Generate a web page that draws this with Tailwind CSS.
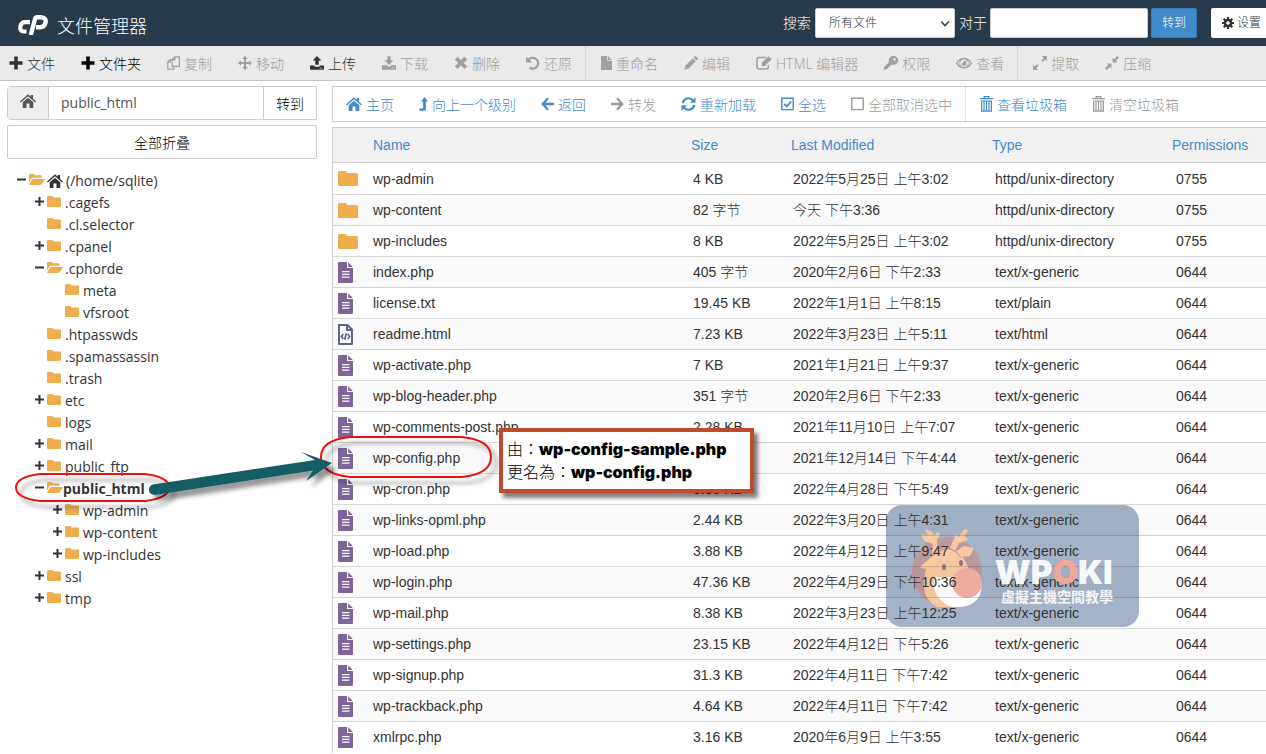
<!DOCTYPE html>
<html lang="zh-CN">
<head>
    <meta charset="UTF-8" />
    <meta name="viewport" content="width=device-width, initial-scale=1.0" />
    <title>文件管理器</title>
    <script src="https://cdn.jsdelivr.net/npm/@tailwindcss/browser@4"></script>
    <style>
        body { font-family: 'Open Sans', 'Noto Sans CJK SC', sans-serif; }
        .grid-font { font-family: 'Liberation Sans', 'Noto Sans CJK SC', sans-serif; }
    </style>
</head>
<body class="bg-white text-[#333] text-sm overflow-x-hidden">
    <!-- Icon sprite -->
    <svg class="hidden">
        <symbol id="plus" viewBox="0 0 14 14"><path d="M5.2 .5h3.6v4.700h4.700v3.600h-4.700v4.700h-3.600v-4.700h-4.700v-3.600h4.700z"/></symbol>
        <symbol id="copy" viewBox="0 0 13 14"><path fill="none" stroke="currentColor" stroke-width="1.200" d="M5.200 3.600 7.600 .800h4.800v9.600H5.200zM7.800 .800v3H5.200M5 3.600H3L.800 6v7.200h6.300v-2.600M3.200 3.900v2.300H.800"/></symbol>
        <symbol id="move" viewBox="0 0 14 14"><path d="M7 0l2.800 3H8v3h3V4.200L14 7l-3 2.800V8H8v3h1.800L7 14l-2.800-3H6V8H3v1.800L0 7l3-2.800V6h3V3H4.200z"/></symbol>
        <symbol id="upload" viewBox="0 0 14 14"><path d="M7 0l4.300 4.600H8.700v4.200H5.300V4.600H2.700zM0 9.400h4.300v.7q.2.700 1 .7h3.400q.8 0 1-.7v-.7H14v3.800q0 .6-.7.600H.7q-.7 0-.7-.6zM9.800 11.800v.9h.9v-.9zm1.800 0v.9h.9v-.9z" fill-rule="evenodd"/></symbol>
        <symbol id="download" viewBox="0 0 14 14"><path d="M5.300 .3h3.400v4h2.700L7 8.900 2.600 4.300h2.700zM0 9.200h4.500L7 11l2.500-1.800H14v4q0 .6-.7.600H.7q-.7 0-.7-.6zM9.800 11.600v.9h.9v-.9zm1.800 0v.9h.9v-.9z" fill-rule="evenodd"/></symbol>
        <symbol id="times" viewBox="0 0 14 14"><path d="M3.500 .800 7 4.100 10.500 .800 13.200 3.400 9.700 6.900 13.200 10.300 10.500 13 7 9.600 3.500 13 .800 10.300 4.300 6.900 .800 3.400z"/></symbol>
        <symbol id="undo" viewBox="0 0 14 14"><path fill="none" stroke="currentColor" stroke-width="2.200" d="M2.400 4A5.400 5.400 0 1 1 3.600 11.600"/><path d="M.2 .4v6h6z"/></symbol>
        <symbol id="file" viewBox="0 0 11 14"><path d="M.7 0H6.200v4.800H11V13.300q0 .7-.7.700H.7q-.7 0-.7-.7V.7Q0 0 .7 0zM7.100 .1l3.800 3.800H7.100z"/></symbol>
        <symbol id="pencil" viewBox="0 0 14 14"><path d="M8.800 2.200 11.800 5.200 4.400 12.800 .3 13.800 1.300 9.700zM9.600 1.400l1-1q.7-.6 1.400 0l1.600 1.600q.6.700 0 1.400l-1 1zM2.200 10.800l-.5 1.600 1.600-.5z" fill-rule="evenodd"/></symbol>
        <symbol id="edit" viewBox="0 0 16 14"><path fill="none" stroke="currentColor" stroke-width="1.500" d="M10.200 1.500H3Q1 1.500 1 3.300v7.700q0 1.900 2 1.900h7.400q1.900 0 1.900-1.900V9"/><path d="M12.500 .2l3.100 3.100-6.700 6.600H5.800V6.800z"/></symbol>
        <symbol id="key" viewBox="0 0 14 14"><path fill-rule="evenodd" d="M9.500 0a4.400 4.400 0 1 1-1.400 8.500l-1 1-1.200.1-.3 1.400-1.400.3-.3 1.300-1.300.2-.6.800-2 .2V11.200l5-5.300A4.400 4.400 0 0 1 9.500 0zM10.500 2.100a1.300 1.300 0 1 0 .1 0z"/></symbol>
        <symbol id="eye" viewBox="0 0 16 14"><path fill-rule="evenodd" d="M8 1.800q5 0 8 5.400-3 5.400-8 5.400t-8-5.400q3-5.400 8-5.400zM8 3.300a3.900 3.900 0 1 0 .1 0zM4 4.300Q2.500 5.400 1.600 7.200q.9 1.700 2.400 2.800-1.200-2.700 0-5.700zm8 0q1.200 3 0 5.700 1.500-1.100 2.400-2.800-.9-1.800-2.400-2.900zM8 4.600a2.600 2.600 0 1 1-2.600 2.600q.9.400 1.600-.2T8 4.600z"/></symbol>
        <symbol id="expand" viewBox="0 0 14 14"><path d="M8.800 0H14v5.200l-1.700-1.700-2.500 2.500-1.600-1.600 2.500-2.500zM0 8.800l1.700 1.700 2.300-2.300L5.600 9.800 3.400 12.200 5.200 14H0z"/></symbol>
        <symbol id="compress" viewBox="0 0 14 14"><path d="M7.600 1.600l1.600 1.500L12.200 0 14 1.700l-3.100 3.100 1.600 1.600H7.600zM1.600 7.600h4.900v4.900L4.900 10.900 1.800 14 0 12.200l3.100-3.100z"/></symbol>
        <symbol id="home" viewBox="0 0 16 14"><path d="M8 .3l2.800 2.500V.9H13v3.900l3 2.600-.9 1.100L8 2.300 .9 8.500l-.9-1.100zM8 3.700l5.300 4.500v5.100q0 .6-.5.600H9.500V9.500h-3v4.400H3.200q-.5 0-.5-.6V8.200z"/></symbol>
        <symbol id="levelup" viewBox="0 0 9 14"><path d="M5.500 0 9 4.600H6.900v7.800q0 1.400-1.400 1.400H.8L0 11.500h4.100V4.600H2z"/></symbol>
        <symbol id="left" viewBox="0 0 13 14"><path fill="none" stroke="currentColor" stroke-width="2.300" d="M7 1.200 1.700 7 7 12.800M1.900 7H13"/></symbol>
        <symbol id="right" viewBox="0 0 13 14"><path fill="none" stroke="currentColor" stroke-width="2.300" d="M6 1.200 11.300 7 6 12.800M11.100 7H0"/></symbol>
        <symbol id="refresh" viewBox="0 0 14 14"><path fill="none" stroke="currentColor" stroke-width="2.200" d="M1.200 6A5.900 5.900 0 0 1 11.500 3.400M12.800 8A5.900 5.900 0 0 1 2.500 10.600"/><path d="M14 .2v5.500H8.500zM0 13.800V8.300h5.500z"/></symbol>
        <symbol id="checked" viewBox="0 0 13 14"><path fill="none" stroke="currentColor" stroke-width="1.400" d="M.8 1.200h11.400v11.400H.8z"/><path fill="none" stroke="currentColor" stroke-width="1.900" d="M3.200 6.800 5.700 9.300 10.200 4.600"/></symbol>
        <symbol id="unchecked" viewBox="0 0 13 14"><path fill="none" stroke="currentColor" stroke-width="1.400" d="M.8 1.200h11.400v11.400H.8z"/></symbol>
        <symbol id="trash" viewBox="0 0 13 16"><path fill="none" stroke="currentColor" stroke-width="1.200" d="M0 2.600h13M4.200 2.600V.6h4.600v2M1.600 5h9.800V15.200H1.600zM4 5V15M6.500 5V15M9 5V15"/></symbol>
        <symbol id="gear" viewBox="0 0 14 14"><circle cx="7" cy="7" r="3.600" fill="none" stroke="currentColor" stroke-width="3"/><path fill="none" stroke="currentColor" stroke-width="2.600" d="M7 0v3M7 11v3M0 7h3M11 7h3M2 2l2 2M10 10l2 2M12 2l-2 2M4 10l-2 2"/></symbol>
        <symbol id="folder" viewBox="0 0 20 15" preserveAspectRatio="none"><path d="M0 1.500Q0 0 1.500 0H7Q8.300 0 8.700 1L9.200 2H18.500Q20 2 20 3.500V13.500Q20 15 18.500 15H1.500Q0 15 0 13.500z"/></symbol>
        <symbol id="folder-open" viewBox="0 0 16 12" preserveAspectRatio="none"><path d="M0 9.200V1.200Q0 0 1.200 0h3.400q1 0 1.200 1.400h5.600q1.200 0 1.200 1.200v1.600H4Q3 4.200 2.300 5.200zM4.200 5.400H15.600q.6.200.2.800l-3 4.800q-.6 1-1.600 1H.4q-.6-.2-.2-.9L3 6.200Q3.500 5.400 4.200 5.400z"/></symbol>
        <symbol id="doc" viewBox="0 0 15 21"><path fill-rule="evenodd" d="M1 0H9V6H15V20Q15 21 14 21H1Q0 21 0 20V1Q0 0 1 0zM10.200 .3 14.800 4.900H10.200zM4 9v1.200h7.500V9zM4 11.800V13h7.500v-1.200zM4 14.600v1.200h7.500v-1.200z"/></symbol>
        <symbol id="code" viewBox="0 0 15 21"><path fill="none" stroke="currentColor" stroke-width="1.900" stroke-linejoin="round" d="M1 1H9.500L14 5.500V20H1zM9 1V6h5"/><path fill="none" stroke="currentColor" stroke-width="1.600" d="M5.300 10 3.300 12.500l2 2.500M9.700 10l2 2.500-2 2.500M8.400 9.200l-1.800 6.600"/></symbol>
    </svg>

    <!-- Top bar -->
    <header class="flex items-center justify-between h-[46px] bg-[#293a4a] text-white">
        <div class="flex items-center pl-[18px] pt-1">
            <svg class="w-[30px] h-5" viewBox="0 0 30 20" fill="none" stroke="#fff">
                <path stroke-width="4.200" d="M12 7.200H7.200Q3.400 7.200 2.400 11.200 1.600 16.500 5.800 16.500H8.500"/>
                <path stroke-width="4.400" d="M12.800 20 17 4Q17.400 2.200 19.200 2.200H23Q28.400 2.500 27.600 7.300 26.600 12.300 21.800 12.300H18"/>
            </svg>
            <h1 class="ml-[9px] pt-0.5 text-lg leading-6 font-light">文件管理器</h1>
        </div>
        <form class="flex items-center font-light">
            <label for="scope">搜索</label>
            <div class="relative ml-1">
                <select id="scope" class="appearance-none w-[140px] h-[30px] pl-[13px] bg-white border border-[#ccc] rounded-xs text-xs text-[#333]">
                    <option>所有文件</option>
                </select>
                <svg class="absolute right-[5px] top-3 w-2.5 h-2" viewBox="0 0 10 8"><path fill="none" stroke="#444" stroke-width="1.600" d="M1 1.500 5 5.500 9 1.500"/></svg>
            </div>
            <label for="query" class="ml-1">对于</label>
            <input id="query" type="text" class="ml-[3px] w-[158px] h-[30px] px-2 bg-white border border-[#ccc] rounded-xs text-[#333]" />
            <button type="button" class="ml-[3px] w-[46px] h-[30px] bg-[#428bca] border border-[#357ebd] rounded-xs text-xs">转到</button>
            <button type="button" class="flex items-center ml-3.5 pl-[11px] w-[55px] h-[30px] bg-white rounded-l-xs text-xs text-[#333] whitespace-nowrap">
                <svg class="w-3 h-3 mr-[3px] fill-current"><use href="#gear"/></svg>设置
            </button>
        </form>
    </header>

    <!-- Main toolbar -->
    <nav class="h-[35px] bg-[#eaeaea] border-b border-[#c5c6c9] overflow-hidden">
        <div id="toolbar" class="flex h-full -ml-1"></div>
    </nav>

    <main class="flex pt-[5px] pl-[7px] gap-[15px]">
        <aside class="w-[310px] shrink-0">
            <form class="flex h-[34px] mb-[5px] border border-[#ccc] rounded-l-sm">
                <button type="button" aria-label="主目录" class="w-[41px] pb-1 flex items-center justify-center bg-[#eee] border-r border-[#ccc] text-[#555]">
                    <svg class="w-4 h-3.5 fill-current"><use href="#home"/></svg>
                </button>
                <input type="text" aria-label="路径" value="public_html" class="flex-1 min-w-0 px-3 text-[#555]" />
                <button type="button" class="w-[53px] pt-0.5 border-l border-[#ccc] font-light text-black">转到</button>
            </form>
            <button type="button" class="block w-full h-[34px] pt-0.5 border border-[#ccc] rounded-xs font-light text-black">全部折叠</button>
            <ul id="tree" class="mt-[11px]"></ul>
        </aside>

        <section class="relative z-10 flex-1 min-w-0">
            <nav id="actions" class="flex h-9 pl-px border border-r-0 border-[#ccc]"></nav>
            <div class="grid-font mt-[5px] border-l border-[#ccc]">
                <table class="w-full table-fixed border-collapse text-left">
                    <thead>
                        <tr class="h-[35px] bg-[#f1f1f1] border-y border-[#ccc] text-[#428bca]">
                            <th class="w-10"></th>
                            <th class="font-normal">Name</th>
                            <th class="w-[100px] font-normal">Size</th>
                            <th class="w-[201px] font-normal">Last Modified</th>
                            <th class="w-[180px] font-normal">Type</th>
                            <th class="w-[94px] font-normal">Permissions</th>
                        </tr>
                    </thead>
                    <tbody id="files" class="font-light"></tbody>
                </table>
            </div>
        </section>
    </main>

    <!-- Watermark: panel and mascot sit under the file rows, wordmark over them -->
    <div class="absolute left-[886px] top-[505px] w-[253px] h-[122px] rounded-2xl bg-[#1e4173]/40 overflow-hidden">
        <svg class="w-full h-full" viewBox="0 0 253 122">
            <circle cx="61" cy="67" r="35" fill="#bb9a9f"/>
            <path fill="#f8c8a0" d="M47 50Q52 43 61 43 69 43 74 49 82 58 84 70L88 90 72 102 51 102Q38 95 38 80 38 60 47 50z"/>
            <path fill="#f8c8a0" d="M46 49 47 39 38 36 35 29 42 31 39 24 45 26 48 30 52 27 54 30 51 35 52 46zM64 43 70 29 73 32 78 24 82 25 79 31 82 35 73 38 69 46zM71 46 78 41 88 43 84 51 75 52zM45 52 34 62 38 64 44 61z"/>
            <path fill="none" stroke="#bb8f90" d="M47 51Q56 42 65 44 71 46 75 53"/>
            <path fill="#fff" d="M49 72Q45 82 52 92 60 103 72 102 88 102 94 90 96 84 96 75L90 87 80 92Z"/>
            <path fill="#fff" d="M49 72 70 72 80 92 56 94z"/>
            <circle cx="81" cy="78" r="15" fill="#f2b0a3"/>
            <ellipse cx="58" cy="62" rx="2" ry="3" fill="#8e7480"/>
            <ellipse cx="75" cy="58" rx="2" ry="3" fill="#8e7480"/>
        </svg>
    </div>
    <div class="absolute z-20 left-[995px] top-[556px] text-white/90 whitespace-nowrap" lang="zh-TW">
        <p class="font-[Inter] font-black text-[33px] leading-8">WP<span class="text-[#f2a899]">O</span>KI</p>
        <p class="pl-1.5 font-bold leading-[18px]">虛擬主機空間教學</p>
    </div>

    <!-- Callouts -->
    <svg class="absolute z-20 left-0 top-0 w-[800px] h-[560px] pointer-events-none" viewBox="0 0 800 560">
        <defs>
            <filter id="shadow" x="-20%" y="-50%" width="140%" height="220%"><feDropShadow dx="5" dy="6" stdDeviation="2" flood-color="#000" flood-opacity=".4"/></filter>
        </defs>
        <g fill="none" stroke="#f01010" stroke-width="2" filter="url(#shadow)">
            <path d="M40 474H145Q169 477 169 487.500T145 501H40Q16 498 16 487.500T40 474z"/>
            <path d="M350 437H462Q491 440 491 457T462 477H350Q321 474 321 457T350 437z"/>
        </g>
        <path fill="#135c63" filter="url(#shadow)" d="M153 484.500 315 460 301 452 332 463 306 481 313 470.500 155 495Q149 494.500 149 490T153 484.500z"/>
    </svg>
    <div class="absolute z-20 left-[499px] top-[428px] w-[255px] h-[65px] pt-1.5 pl-1 bg-white border-4 border-[#bf4a30] shadow-[4px_5px_4px_rgba(0,0,0,0.5)] text-base leading-[23px] text-black font-light whitespace-nowrap" lang="zh-TW">
        <p>由：<strong class="font-[Inter] font-black">wp-config-sample.php</strong></p>
        <p>更名為：<strong class="font-[Inter] font-black">wp-config.php</strong></p>
    </div>

    <script>
        // [icon, icon size classes, label, state, divider after]
        const toolbarItems = [
            ["plus", "w-3.5 h-3.5", "文件", "on"],
            ["plus", "w-3.5 h-3.5", "文件夹", "strong"],
            ["copy", "w-[13px] h-3.5", "复制", "off"],
            ["move", "w-3.5 h-3.5", "移动", "off"],
            ["upload", "w-3.5 h-3.5", "上传", "on"],
            ["download", "w-3.5 h-3.5", "下载", "off"],
            ["times", "w-3.5 h-3.5", "删除", "off"],
            ["undo", "w-3.5 h-3.5", "还原", "off", true],
            ["file", "w-[11px] h-3.5", "重命名", "off"],
            ["pencil", "w-3.5 h-3.5", "编辑", "off"],
            ["edit", "w-4 h-3.5", "HTML 编辑器", "off"],
            ["key", "w-3.5 h-3.5", "权限", "off"],
            ["eye", "w-4 h-3.5", "查看", "off", true],
            ["expand", "w-3.5 h-3.5", "提取", "off"],
            ["compress", "w-3.5 h-3.5", "压缩", "off"],
        ];

        const actionItems = [
            ["home", "w-4 h-3.5", "主页", "link"],
            ["levelup", "w-[9px] h-3.5", "向上一个级别", "link"],
            ["left", "w-[13px] h-3.5", "返回", "link"],
            ["right", "w-[13px] h-3.5", "转发", "muted"],
            ["refresh", "w-[15px] h-3.5", "重新加载", "link"],
            ["checked", "w-[13px] h-3.5", "全选", "link"],
            ["unchecked", "w-[13px] h-3.5", "全部取消选中", "muted", true],
            ["trash", "w-[13px] h-4", "查看垃圾箱", "link"],
            ["trash", "w-[13px] h-4", "清空垃圾箱", "muted"],
        ];

        const stateClass = {
            on: "text-[#333]",
            strong: "text-black",
            off: "text-[#a0a0a0]",
            link: "text-[#428bca]",
            muted: "text-[#999]",
        };

        function renderBar(id, items, padding) {
            document.getElementById(id).innerHTML = items.map(([icon, size, label, state, divider]) => `
                <button type="button" class="flex items-center gap-1 ${padding} whitespace-nowrap shrink-0 ${stateClass[state]}">
                    <svg class="${size} fill-current"><use href="#${icon}"/></svg>
                    <span class="pt-0.5 font-light">${label}</span>
                </button>
                ${divider ? '<i class="border-l border-dotted border-[#ccc] mr-0.5"></i>' : ''}
            `).join('');
        }

        // [depth, toggle, name, icon]
        const tree = [
            [0, "−", "(/home/sqlite)", "folder-open"],
            [1, "+", ".cagefs", "folder"],
            [1, "", ".cl.selector", "folder"],
            [1, "+", ".cpanel", "folder"],
            [1, "−", ".cphorde", "folder-open"],
            [2, "", "meta", "folder"],
            [2, "", "vfsroot", "folder"],
            [1, "", ".htpasswds", "folder"],
            [1, "", ".spamassassin", "folder"],
            [1, "", ".trash", "folder"],
            [1, "+", "etc", "folder"],
            [1, "", "logs", "folder"],
            [1, "+", "mail", "folder"],
            [1, "+", "public_ftp", "folder"],
            [1, "−", "public_html", "folder-open"],
            [2, "+", "wp-admin", "folder"],
            [2, "+", "wp-content", "folder"],
            [2, "+", "wp-includes", "folder"],
            [1, "+", "ssl", "folder"],
            [1, "+", "tmp", "folder"],
        ];
        const indent = ["pl-2.5", "pl-7", "pl-[46px]"];

        document.getElementById("tree").innerHTML = tree.map(([depth, toggle, name, icon]) => `
            <li class="flex items-center h-[22px] ${indent[depth]}">
                <svg class="w-[9px] h-[9px] mb-1 mr-[3px]" viewBox="0 0 9 9" stroke="#333" stroke-width="2">
                    ${toggle ? '<path d="M0 4.500h9"/>' : ''}${toggle === '+' ? '<path d="M4.500 0v9"/>' : ''}
                </svg>
                <svg class="${icon === 'folder' ? 'w-3.5 mr-1' : 'w-4 mr-0.5'} h-[11px] mb-1 fill-[#f0ad4e]"><use href="#${icon}"/></svg>
                ${depth ? '' : '<svg class="w-4 h-3.5 mr-[3px] fill-[#333]"><use href="#home"/></svg>'}
                <a href="#" class="${name === 'public_html' ? 'font-bold -ml-0.5' : ''}">${name}</a>
            </li>
        `).join('');

        const files = [
            ["wp-admin", "4 KB", "2022年5月25日 上午3:02", "httpd/unix-directory", "0755"],
            ["wp-content", "82 字节", "今天 下午3:36", "httpd/unix-directory", "0755"],
            ["wp-includes", "8 KB", "2022年5月25日 上午3:02", "httpd/unix-directory", "0755"],
            ["index.php", "405 字节", "2020年2月6日 下午2:33", "text/x-generic", "0644"],
            ["license.txt", "19.45 KB", "2022年1月1日 上午8:15", "text/plain", "0644"],
            ["readme.html", "7.23 KB", "2022年3月23日 上午5:11", "text/html", "0644"],
            ["wp-activate.php", "7 KB", "2021年1月21日 上午9:37", "text/x-generic", "0644"],
            ["wp-blog-header.php", "351 字节", "2020年2月6日 下午2:33", "text/x-generic", "0644"],
            ["wp-comments-post.php", "2.28 KB", "2021年11月10日 上午7:07", "text/x-generic", "0644"],
            ["wp-config.php", "3.06 KB", "2021年12月14日 下午4:44", "text/x-generic", "0644"],
            ["wp-cron.php", "3.85 KB", "2022年4月28日 下午5:49", "text/x-generic", "0644"],
            ["wp-links-opml.php", "2.44 KB", "2022年3月20日 上午4:31", "text/x-generic", "0644"],
            ["wp-load.php", "3.88 KB", "2022年4月12日 上午9:47", "text/x-generic", "0644"],
            ["wp-login.php", "47.36 KB", "2022年4月29日 下午10:36", "text/x-generic", "0644"],
            ["wp-mail.php", "8.38 KB", "2022年3月23日 上午12:25", "text/x-generic", "0644"],
            ["wp-settings.php", "23.15 KB", "2022年4月12日 下午5:26", "text/x-generic", "0644"],
            ["wp-signup.php", "31.3 KB", "2022年4月11日 下午7:42", "text/x-generic", "0644"],
            ["wp-trackback.php", "4.64 KB", "2022年4月11日 下午7:42", "text/x-generic", "0644"],
            ["xmlrpc.php", "3.16 KB", "2020年6月9日 上午3:55", "text/x-generic", "0644"],
        ];

        function fileIcon(type) {
            if (type.startsWith("httpd")) return '<svg class="w-5 h-[15px] fill-[#f0ad4e]"><use href="#folder"/></svg>';
            if (type === "text/html") return '<svg class="w-[15px] h-[21px] text-[#58608f]"><use href="#code"/></svg>';
            return '<svg class="w-[15px] h-[21px] fill-[#7f6399]"><use href="#doc"/></svg>';
        }

        document.getElementById("files").innerHTML = files.map(([name, size, modified, type, perms]) => `
            <tr class="h-[31px] first:h-8 even:bg-black/2 border-b border-black/15 last:border-b-0 whitespace-nowrap">
                <td class="pl-[5px]">${fileIcon(type)}</td>
                <td>${name}</td>
                <td class="pl-0.5">${size}</td>
                <td class="pl-0.5">${modified}</td>
                <td class="pl-[3px]">${type}</td>
                <td class="pl-1">${perms}</td>
            </tr>
        `).join('');

        renderBar("toolbar", toolbarItems, "px-[13px]");
        renderBar("actions", actionItems, "pl-3 pr-[13px]");
    </script>
</body>
</html>
